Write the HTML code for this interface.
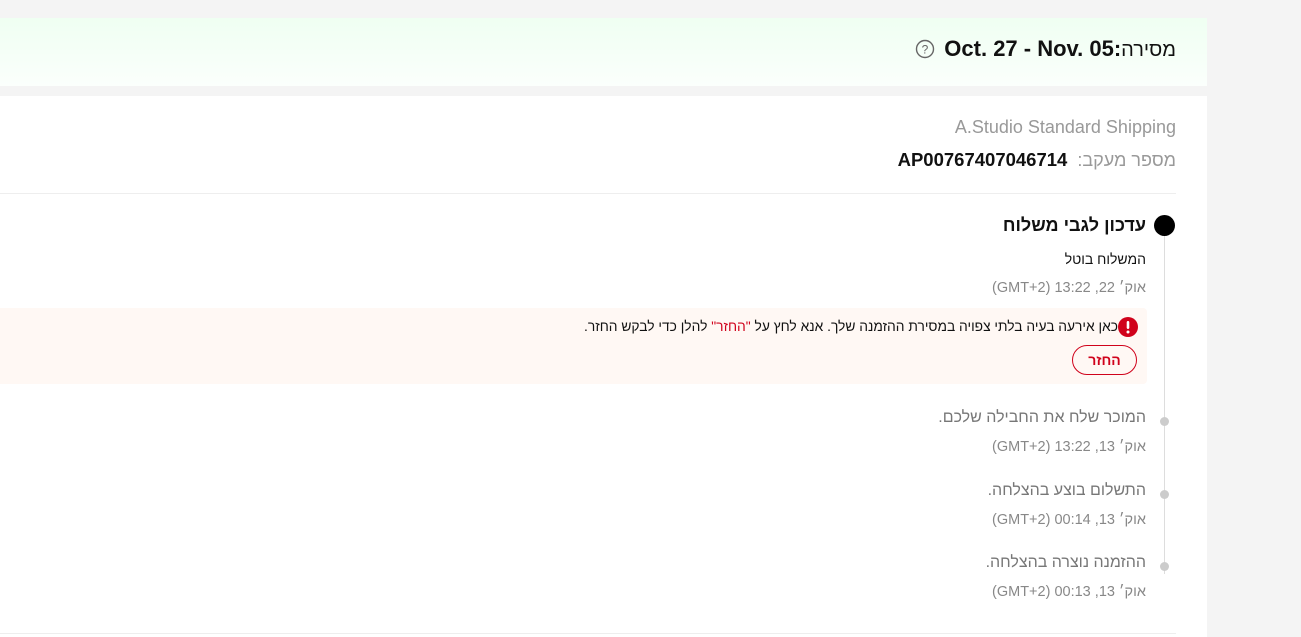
<!DOCTYPE html>
<html><head><meta charset="utf-8"><style>
*{margin:0;padding:0;box-sizing:border-box}
body{width:1301px;height:637px;background:#f4f4f4;font-family:"Liberation Sans","DejaVu Sans",sans-serif;position:relative;overflow:hidden}
.a{position:absolute;white-space:nowrap}
.r{direction:rtl;text-align:right}
</style></head><body>
<div class="a" style="left:0;top:18px;width:1207px;height:68px;background:linear-gradient(180deg,#effff2,#fbfffc)"></div>
<div class="a" style="left:0;top:96px;width:1207px;height:541px;background:#fff"></div>

<div class="a" style="right:125px;top:36px;font-size:22px;font-weight:bold;color:#111;direction:ltr">Oct. 27 - Nov. 05:<span style="font-weight:normal;font-size:20px">מסירה</span></div>
<svg class="a" style="left:915px;top:39px" width="20" height="20" viewBox="0 0 20 20"><circle cx="10" cy="10" r="8.5" fill="none" stroke="#666" stroke-width="1.4"/><text x="10" y="14.5" font-size="12" text-anchor="middle" fill="#666" font-family="Liberation Sans">?</text></svg>

<div class="a" style="right:125px;top:117px;font-size:18px;color:#999">A.Studio Standard Shipping</div>
<div class="a r" style="right:125px;top:149px;font-size:18px;color:#999">מספר מעקב: &nbsp;<span style="color:#111;font-weight:bold;font-size:18.5px">AP00767407046714</span></div>
<div class="a" style="left:0;top:193px;width:1176px;height:1px;background:#eee"></div>

<div class="a" style="left:1164px;top:234px;width:1px;height:340px;background:#ddd"></div>
<div class="a" style="left:1154px;top:215px;width:21px;height:21px;border-radius:50%;background:#000"></div>
<div class="a r" style="right:155px;top:215px;font-size:18px;font-weight:bold;color:#111">עדכון לגבי משלוח</div>
<div class="a r" style="right:155px;top:251px;font-size:14px;color:#111">המשלוח בוטל</div>
<div class="a r" style="right:155px;top:280px;font-size:14.5px;color:#888">אוק׳ 22, 13:22 (GMT+2)</div>

<div class="a" style="left:0;top:308px;width:1147px;height:76px;background:#fff8f4;border-radius:0 4px 4px 0"></div>
<svg class="a" style="left:1118px;top:317px" width="20" height="20" viewBox="0 0 20 20"><circle cx="10" cy="10" r="10" fill="#d0021b"/><rect x="8.7" y="4" width="2.6" height="8" rx="1.2" fill="#fff"/><circle cx="10" cy="15" r="1.5" fill="#fff"/></svg>
<div class="a r" style="right:183px;top:319px;font-size:13.8px;color:#111">כאן אירעה בעיה בלתי צפויה במסירת ההזמנה שלך. אנא לחץ על <span style="color:#d0021b">"החזר"</span> להלן כדי לבקש החזר.</div>
<div class="a" style="left:1072px;top:345px;width:65px;height:30px;border:1px solid #d0021b;border-radius:15px;color:#d0021b;font-size:14px;font-weight:bold;text-align:center;line-height:28px">החזר</div>

<div class="a" style="left:1160px;top:417px;width:9px;height:9px;border-radius:50%;background:#ccc"></div>
<div class="a r" style="right:155px;top:409px;font-size:16px;color:#777">המוכר שלח את החבילה שלכם.</div>
<div class="a r" style="right:155px;top:439px;font-size:14.5px;color:#888">אוק׳ 13, 13:22 (GMT+2)</div>

<div class="a" style="left:1160px;top:490px;width:9px;height:9px;border-radius:50%;background:#ccc"></div>
<div class="a r" style="right:155px;top:482px;font-size:16px;color:#777">התשלום בוצע בהצלחה.</div>
<div class="a r" style="right:155px;top:512px;font-size:14.5px;color:#888">אוק׳ 13, 00:14 (GMT+2)</div>

<div class="a" style="left:1160px;top:562px;width:9px;height:9px;border-radius:50%;background:#ccc"></div>
<div class="a r" style="right:155px;top:554px;font-size:16px;color:#777">ההזמנה נוצרה בהצלחה.</div>
<div class="a r" style="right:155px;top:584px;font-size:14.5px;color:#888">אוק׳ 13, 00:13 (GMT+2)</div>

<div class="a" style="left:0;top:633px;width:1176px;height:1px;background:#eee"></div>
</body></html>
